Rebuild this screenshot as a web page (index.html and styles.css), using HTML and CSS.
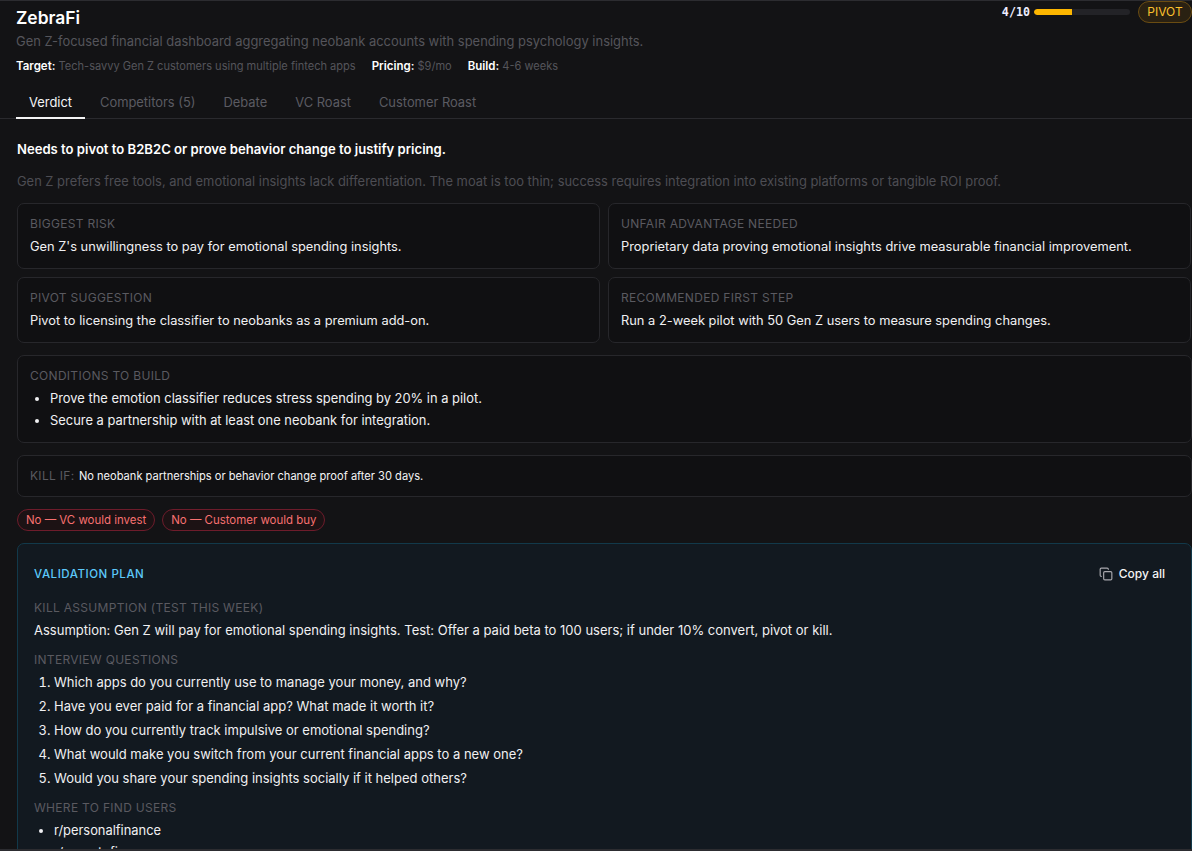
FILE: index.html
```html
<!DOCTYPE html>
<html lang="en">
<head>
<meta charset="utf-8">
<title>ZebraFi</title>
<link rel="stylesheet" href="styles.css">
</head>
<body>
<div class="dialog">
  <header class="head">
    <div class="head-main">
      <h1 class="title">ZebraFi</h1>
      <p class="desc">Gen Z-focused financial dashboard aggregating neobank accounts with spending psychology insights.</p>
      <div class="meta">
        <span><b>Target:</b> Tech-savvy Gen Z customers using multiple fintech apps</span>
        <span><b>Pricing:</b> $9/mo</span>
        <span><b>Build:</b> 4-6 weeks</span>
      </div>
    </div>
    <div class="score">
      <span class="score-num">4/10</span>
      <span class="bar"><span class="bar-fill" style="width:40%"></span></span>
      <span class="badge">PIVOT</span>
    </div>
  </header>
  <nav class="tabs">
    <a class="tab active">Verdict</a>
    <a class="tab">Competitors (5)</a>
    <a class="tab">Debate</a>
    <a class="tab">VC Roast</a>
    <a class="tab">Customer Roast</a>
  </nav>
  <main class="content">
    <p class="headline">Needs to pivot to B2B2C or prove behavior change to justify pricing.</p>
    <p class="summary">Gen Z prefers free tools, and emotional insights lack differentiation. The moat is too thin; success requires integration into existing platforms or tangible ROI proof.</p>
    <div class="grid">
      <section class="card"><h3 class="label">BIGGEST RISK</h3><p class="text">Gen Z's unwillingness to pay for emotional spending insights.</p></section>
      <section class="card"><h3 class="label">UNFAIR ADVANTAGE NEEDED</h3><p class="text">Proprietary data proving emotional insights drive measurable financial improvement.</p></section>
      <section class="card"><h3 class="label">PIVOT SUGGESTION</h3><p class="text">Pivot to licensing the classifier to neobanks as a premium add-on.</p></section>
      <section class="card"><h3 class="label">RECOMMENDED FIRST STEP</h3><p class="text">Run a 2-week pilot with 50 Gen Z users to measure spending changes.</p></section>
    </div>
    <section class="card conditions">
      <h3 class="label">CONDITIONS TO BUILD</h3>
      <ul class="list">
        <li>Prove the emotion classifier reduces stress spending by 20% in a pilot.</li>
        <li>Secure a partnership with at least one neobank for integration.</li>
      </ul>
    </section>
    <section class="card kill"><span class="label">KILL IF:</span> <span class="kill-text">No neobank partnerships or behavior change proof after 30 days.</span></section>
    <div class="pills">
      <span class="pill">No — VC would invest</span>
      <span class="pill">No — Customer would buy</span>
    </div>
    <section class="plan">
      <div class="plan-head">
        <h2 class="plan-title">VALIDATION PLAN</h2>
        <button class="copy" type="button">
          <svg class="copy-icon" viewBox="0 0 24 24" fill="none" stroke="currentColor" stroke-width="2" stroke-linecap="round" stroke-linejoin="round"><rect x="8" y="8" width="14" height="14" rx="2"></rect><path d="M4 16c-1.1 0-2-.9-2-2V4c0-1.1.9-2 2-2h10c1.1 0 2 .9 2 2"></path></svg>
          Copy all
        </button>
      </div>
      <h3 class="label">KILL ASSUMPTION (TEST THIS WEEK)</h3>
      <p class="text assumption">Assumption: Gen Z will pay for emotional spending insights. Test: Offer a paid beta to 100 users; if under 10% convert, pivot or kill.</p>
      <h3 class="label">INTERVIEW QUESTIONS</h3>
      <ol class="list numbered">
        <li>Which apps do you currently use to manage your money, and why?</li>
        <li>Have you ever paid for a financial app? What made it worth it?</li>
        <li>How do you currently track impulsive or emotional spending?</li>
        <li>What would make you switch from your current financial apps to a new one?</li>
        <li>Would you share your spending insights socially if it helped others?</li>
      </ol>
      <h3 class="label">WHERE TO FIND USERS</h3>
      <ul class="list">
        <li>r/personalfinance</li>
        <li>r/povertyfinance</li>
      </ul>
    </section>
  </main>
</div>
</body>
</html>
```
FILE: styles.css
```css
* { box-sizing: border-box; }
html, body { margin: 0; height: 100%; background: #131315; overflow: hidden; }
body { font-family: Inter, "Liberation Sans", sans-serif; color: #f4f4f5; }
.dialog { height: 851px; overflow: hidden; border-top: 1px solid #2c2c30; border-bottom: 2px solid #2c2c30; background: #131315; }
.head { display: flex; justify-content: space-between; align-items: flex-start; padding-left: 16px; height: 85px; }
.title { margin: 5px 0 0; font-size: 17.4px; line-height: 24px; font-weight: 600; color: #fff; }
.desc { margin: 1px 0 0; font-size: 12.95px; line-height: 20px; color: #55555b; }
.meta { display: flex; gap: 16px; margin-top: 7px; font-size: 11.05px; line-height: 16px; color: #55555b; }
.meta b { color: #fff; font-weight: 600; font-size: 11.5px; }
.score { display: flex; align-items: center; }
.score-num { font-family: "DejaVu Sans Mono", monospace; font-size: 11.7px; font-weight: 700; color: #eef; margin-right: 4px; }
.bar { display: block; width: 96px; height: 6px; border-radius: 3px; background: #232327; overflow: hidden; margin-right: 8px; }
.bar-fill { display: block; height: 100%; background: #fdb600; border-radius: 3px 0 0 3px; }
.badge { width: 54px; height: 22px; border: 1px solid #6a4c12; border-radius: 11px; background: #2a2112; color: #fbc02d; font-size: 12px; line-height: 20px; text-align: center; }
.tabs { display: flex; padding-left: 16px; height: 33px; border-bottom: 1px solid #2a2a2e; }
.tab { height: 33px; padding: 0 13px; font-size: 12.9px; line-height: 33px; color: #5b5b62; margin-right: 2px; }
.tab.active { color: #f4f4f5; border-bottom: 2px solid #f4f4f5; }
.content { padding-left: 17px; }
.headline { margin: 20px 0 0; font-size: 13.1px; line-height: 20px; font-weight: 600; color: #fff; }
.summary { margin: 13px 0 0; font-size: 12.9px; line-height: 20px; color: #4d4d53; }
.grid { display: grid; grid-template-columns: 583px 583px; gap: 8px; margin-top: 11px; }
.card { border: 1px solid #27272b; border-radius: 7px; background: #101012; padding: 12px; }
.grid .card { height: 66px; }
.label { margin: 0; font-size: 12px; line-height: 16px; font-weight: 400; letter-spacing: .3px; color: #5a5a60; }
.text { margin: 5px 0 0; font-size: 12.85px; line-height: 20px; color: #f0f0f2; }
.conditions { margin-top: 12px; height: 88px; }
.list { margin: 4px 0 0; padding: 0 0 0 20px; font-size: 12.9px; line-height: 22px; color: #f0f0f2; }
.kill { margin-top: 12px; height: 42px; padding: 9px 12px; line-height: 18px; }
.kill-text { font-size: 11.1px; color: #f4f4f5; }
.pills { display: flex; gap: 7px; margin-top: 12px; }
.pill { height: 22px; padding: 0 8px; border: 1px solid #6e1c2b; border-radius: 11px; background: #1c1214; color: #f87171; font-size: 11.45px; line-height: 20px; }
.plan { margin-top: 12px; height: 400px; padding: 16px; border: 1px solid #12394a; border-radius: 7px; background: #121920; }
.plan-head { display: flex; justify-content: space-between; align-items: center; height: 28px; margin-bottom: 12px; }
.plan-title { margin: 0; font-size: 11.5px; font-weight: 500; letter-spacing: .55px; color: #5cc8fa; }
.copy { display: flex; align-items: center; gap: 6px; padding: 0 10px 1px; border: 0; background: none; color: #f4f4f5; font: 500 12px Inter, sans-serif; }
.copy-icon { width: 14px; height: 14px; color: #a8a8ad; }
.assumption { margin: 4px 0 12px; font-size: 13px; }
.numbered { margin: 2px 0 10px; font-size: 13px; line-height: 24px; }
```
